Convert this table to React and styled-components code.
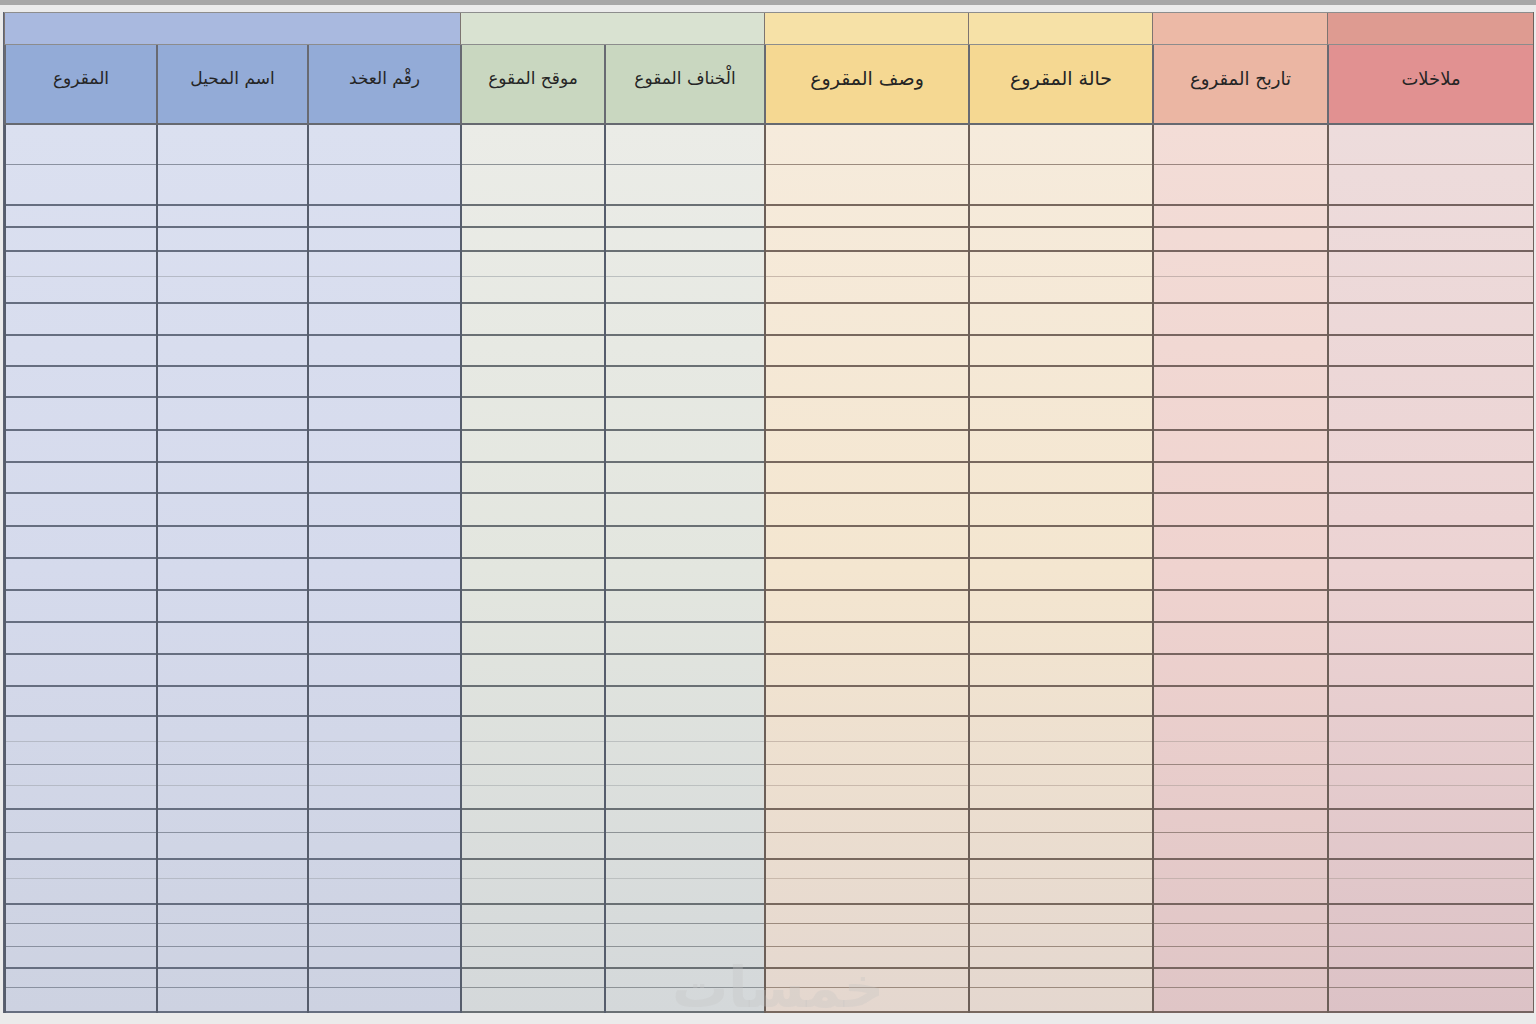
import React from "react";
import styled, { createGlobalStyle } from "styled-components";

const GlobalStyle = createGlobalStyle`
  html, body {
    margin: 0;
    padding: 0;
    background: #ebebeb;
  }
  * {
    box-sizing: border-box;
  }
`;

// palette per colour group
const tones = {
  blue: {
    band: "#a9b9df",
    head: "#93abd7",
    body: "linear-gradient(180deg, #dbe0f0 0%, #d5daec 50%, #cdd2e1 100%)",
    edge: "#565d6c",
    line: { d: "#666e80", m: "#8a91a0", l: "#b5bac6" },
  },
  green: {
    band: "#d9e2d1",
    head: "#c9d7c0",
    body: "linear-gradient(180deg, #ebece7 0%, #e3e6df 50%, #d4d8da 100%)",
    edge: "#565d6c",
    line: { d: "#6a7074", m: "#8e9396", l: "#bcc0c0" },
  },
  yellow: {
    band: "#f6e1a7",
    head: "#f5d892",
    body: "linear-gradient(180deg, #f6ebdc 0%, #f4e6d0 50%, #e4d7cf 100%)",
    edge: "#6c5f58",
    line: { d: "#78685e", m: "#9c8b7e", l: "#c9b9ac" },
  },
  salmon: {
    band: "#ecb9a6",
    head: "#ebb6a3",
    body: "linear-gradient(180deg, #f3ddd7 0%, #efd3cf 50%, #dfc5c6 100%)",
    edge: "#6c5f58",
    line: { d: "#786560", m: "#9b8680", l: "#c6b2ae" },
  },
  red: {
    band: "#de9b91",
    head: "#e19191",
    body: "linear-gradient(180deg, #eddcdc 0%, #ecd3d3 50%, #dcc2c6 100%)",
    edge: "#6c5f58",
    line: { d: "#756360", m: "#988480", l: "#c4b0ae" },
  },
};

// right to left
const columns = [
  { title: "ملاخلات", width: 206, tone: "red", size: 18 },
  { title: "تاربح المقروع", width: 175, tone: "salmon", size: 18 },
  { title: "حالة المقروع", width: 184, tone: "yellow", size: 19 },
  { title: "وصف المقروع", width: 204, tone: "yellow", size: 19 },
  { title: "الْخناف المقوع", width: 160, tone: "green", size: 17 },
  { title: "موقح المقوع", width: 144, tone: "green", size: 17 },
  { title: "رقْم العخد", width: 153, tone: "blue", size: 17 },
  { title: "اسم المحيل", width: 151, tone: "blue", size: 17 },
  { title: "المقروع", width: 152, tone: "blue", size: 17 },
];

const bands = [
  { tone: "red", span: 1 },
  { tone: "salmon", span: 1 },
  { tone: "yellow", span: 1 },
  { tone: "yellow", span: 1 },
  { tone: "green", span: 2 },
  { tone: "blue", span: 3 },
];

const edges = [
  124, 164, 205, 227, 251, 276, 303, 335, 366, 397, 430, 462, 493, 526, 558,
  590, 622, 654, 686, 716, 741, 764, 785, 809, 832, 859, 878, 904, 923, 946,
  968, 987, 1012,
];
const weights = "mdddlddddddddddddddlmldmdldmmdmd";

const rows = edges.slice(1).map((y, i) => ({
  height: y - edges[i],
  weight: weights[i] || "m",
}));

const gridCols = columns.map((c) => `${c.width}px`).join(" ");

const Page = styled.div`
  position: relative;
  min-height: 1024px;
  border-top: 5px solid #a7a7a7;
  padding: 7px 3px 12px 4px;
  font-family: "DejaVu Sans", "Noto Sans", sans-serif;
`;

const Sheet = styled.div`
  width: 1529px;
  border-top: 1px solid #8d8d8d;
  box-shadow: -1px 0 0 #5d6372, 1px 0 0 #6e615c;
`;

const BandRow = styled.div`
  display: grid;
  grid-template-columns: ${gridCols};
  height: 32px;
`;

const Band = styled.div`
  grid-column: span ${(p) => p.$span};
  background: ${(p) => tones[p.$tone].band};
  border-bottom: 1px solid #8c8c8c;
  border-left: 1px solid #7d7470;
`;

const HeadRow = styled.div`
  display: grid;
  grid-template-columns: ${gridCols};
  height: 80px;
`;

const HeadCell = styled.div`
  display: flex;
  align-items: center;
  justify-content: center;
  padding-bottom: 12px;
  background: ${(p) => tones[p.$tone].head};
  border-left: 2px solid #686a72;
  border-bottom: 2px solid #666970;
  color: #252525;
  font-size: ${(p) => p.$size}px;
`;

const Body = styled.div`
  display: grid;
  grid-template-columns: ${gridCols};
`;

const Column = styled.div`
  display: flex;
  flex-direction: column;
  background: ${(p) => tones[p.$tone].body};
  border-left: 2px solid ${(p) => tones[p.$tone].edge};
`;

const Cell = styled.div`
  height: ${(p) => p.$h}px;
  border-bottom: ${(p) => (p.$w === "d" ? 2 : 1)}px solid
    ${(p) => tones[p.$tone].line[p.$w]};
`;

const Watermark = styled.div`
  position: absolute;
  left: 672px;
  top: 950px;
  width: 190px;
  text-align: center;
  font-family: "DejaVu Sans", sans-serif;
  font-weight: bold;
  font-size: 56px;
  color: rgba(195, 195, 195, 0.3);
  pointer-events: none;
`;

export default function App() {
  return (
    <>
      <GlobalStyle />
      <Page>
        <Sheet dir="rtl">
          <BandRow>
            {bands.map((b, i) => (
              <Band key={i} $tone={b.tone} $span={b.span} />
            ))}
          </BandRow>
          <HeadRow>
            {columns.map((c) => (
              <HeadCell key={c.title} $tone={c.tone} $size={c.size}>
                {c.title}
              </HeadCell>
            ))}
          </HeadRow>
          <Body>
            {columns.map((c) => (
              <Column key={c.title} $tone={c.tone}>
                {rows.map((r, i) => (
                  <Cell key={i} $h={r.height} $w={r.weight} $tone={c.tone} />
                ))}
              </Column>
            ))}
          </Body>
        </Sheet>
        <Watermark>خمسات</Watermark>
      </Page>
    </>
  );
}
